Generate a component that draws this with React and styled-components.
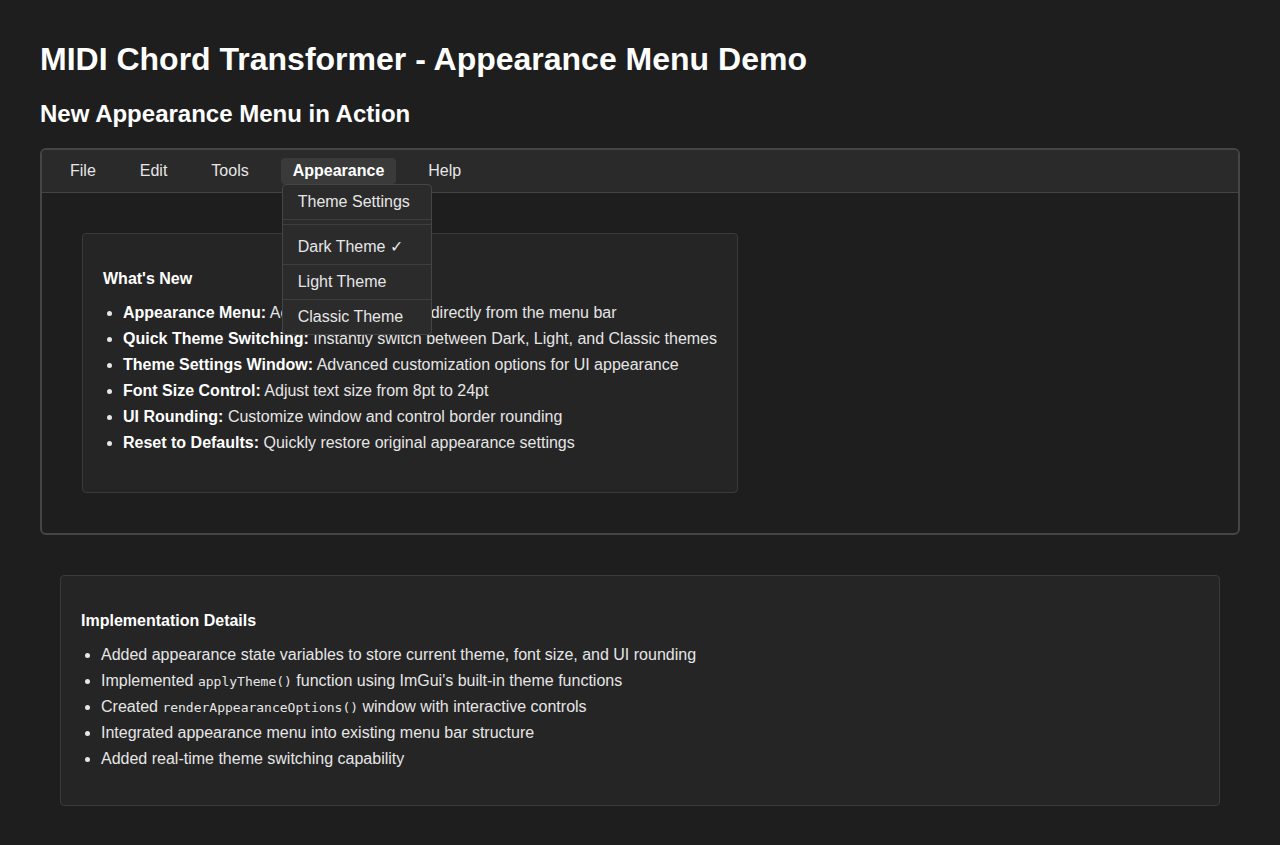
import React from "react";
import styled, { createGlobalStyle } from "styled-components";

const GlobalStyle = createGlobalStyle`
  html, body {
    margin: 0;
    background: #1e1e1e;
  }
  body {
    padding: 41px 40px 40px;
    color: #e6e6e6;
    font-family: "Liberation Sans", Arial, sans-serif;
    font-size: 16px;
  }
`;

const Title = styled.h1`
  margin: 0 0 22px;
  font-size: 32px;
  line-height: 37px;
  font-weight: bold;
  color: #ffffff;
`;

const Subtitle = styled.h2`
  margin: 0 0 20px;
  font-size: 24px;
  line-height: 28px;
  font-weight: bold;
  color: #ffffff;
`;

const Frame = styled.div`
  border: 2px solid #454545;
  border-radius: 6px;
  background: #1e1e1e;
`;

const MenuBar = styled.div`
  display: flex;
  align-items: center;
  gap: 20px;
  padding: 8px 16px;
  background: #2a2a2b;
  border-bottom: 1px solid #444;
  border-radius: 4px 4px 0 0;
`;

const MenuSlot = styled.div`
  position: relative;
`;

const MenuItem = styled.div`
  padding: 4px 12px;
  line-height: 18px;
  border-radius: 4px;
  color: ${(p) => (p.$open ? "#ffffff" : "#e6e6e6")};
  font-weight: ${(p) => (p.$open ? "bold" : "normal")};
  background: ${(p) => (p.$open ? "#3a3a3a" : "transparent")};
`;

const Dropdown = styled.div`
  position: absolute;
  top: 26px;
  left: 1px;
  width: 148px;
  background: #2b2b2c;
  border: 1px solid #454545;
  border-radius: 4px;
  z-index: 10;
`;

const DropItem = styled.div`
  padding: 8px 15px;
  line-height: 18px;
  white-space: nowrap;
  color: #e6e6e6;
  border-bottom: ${(p) => (p.$last ? "none" : "1px solid #3e3e3e")};
`;

const Separator = styled.div`
  height: 1px;
  margin: 4px 0 5px;
  background: #3e3e3e;
`;

const FrameBody = styled.div`
  padding: 40px;
`;

const Card = styled.div`
  width: ${(p) => (p.$fit ? "fit-content" : "auto")};
  margin: ${(p) => p.$margin || "0"};
  padding: 20px;
  background: #252525;
  border: 1px solid #3a3a3a;
  border-radius: 4px;
`;

const CardTitle = styled.h3`
  margin: 16px 0 16px;
  font-size: 16px;
  line-height: 18px;
  font-weight: bold;
  color: #ffffff;
`;

const List = styled.ul`
  margin: 0 0 ${(p) => p.$tail}px;
  padding-left: 20px;
`;

const Item = styled.li`
  line-height: 18px;
  & + & {
    margin-top: 8px;
  }
  b {
    color: #ffffff;
  }
`;

const Code = styled.code`
  font-family: "DejaVu Sans Mono", "Liberation Mono", monospace;
  font-size: 13px;
  line-height: 1;
`;

const menus = ["File", "Edit", "Tools", "Appearance", "Help"];

const features = [
  ["Appearance Menu:", "Access theme options directly from the menu bar"],
  ["Quick Theme Switching:", "Instantly switch between Dark, Light, and Classic themes"],
  ["Theme Settings Window:", "Advanced customization options for UI appearance"],
  ["Font Size Control:", "Adjust text size from 8pt to 24pt"],
  ["UI Rounding:", "Customize window and control border rounding"],
  ["Reset to Defaults:", "Quickly restore original appearance settings"],
];

export default function App() {
  return (
    <>
      <GlobalStyle />
      <Title>MIDI Chord Transformer - Appearance Menu Demo</Title>
      <Subtitle>New Appearance Menu in Action</Subtitle>
      <Frame>
        <MenuBar>
          {menus.map((m) => (
            <MenuSlot key={m}>
              <MenuItem $open={m === "Appearance"}>{m}</MenuItem>
              {m === "Appearance" && (
                <Dropdown>
                  <DropItem>Theme Settings</DropItem>
                  <Separator />
                  <DropItem>Dark Theme ✓</DropItem>
                  <DropItem>Light Theme</DropItem>
                  <DropItem $last>Classic Theme</DropItem>
                </Dropdown>
              )}
            </MenuSlot>
          ))}
        </MenuBar>
        <FrameBody>
          <Card $fit>
            <CardTitle>What's New</CardTitle>
            <List $tail={20}>
              {features.map(([k, v]) => (
                <Item key={k}>
                  <b>{k}</b> {v}
                </Item>
              ))}
            </List>
          </Card>
        </FrameBody>
      </Frame>
      <Card $margin="40px 20px 0">
        <CardTitle>Implementation Details</CardTitle>
        <List $tail={17}>
          <Item>Added appearance state variables to store current theme, font size, and UI rounding</Item>
          <Item>
            Implemented <Code>applyTheme()</Code> function using ImGui's built-in theme functions
          </Item>
          <Item>
            Created <Code>renderAppearanceOptions()</Code> window with interactive controls
          </Item>
          <Item>Integrated appearance menu into existing menu bar structure</Item>
          <Item>Added real-time theme switching capability</Item>
        </List>
      </Card>
    </>
  );
}
